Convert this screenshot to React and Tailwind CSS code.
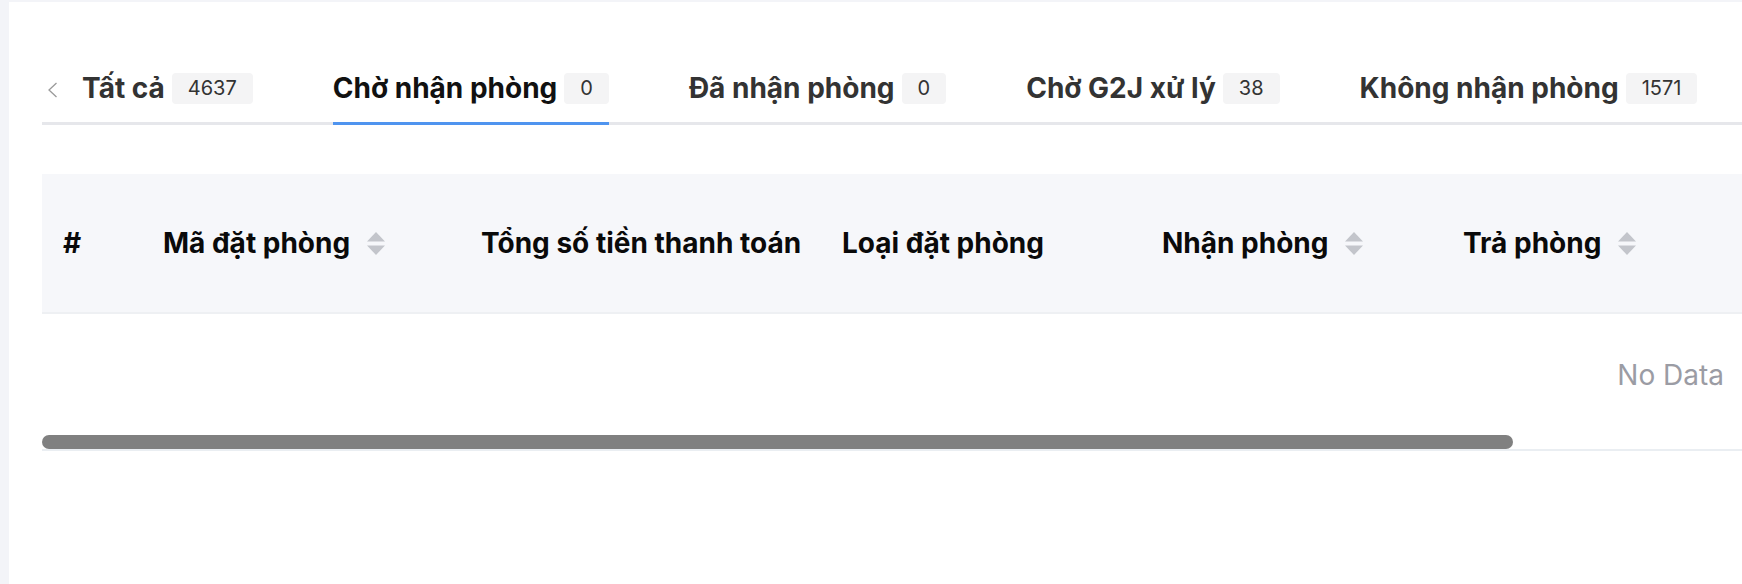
import React from 'react';

const tabs = [
  { label: 'Tất cả', count: '4637' },
  { label: 'Chờ nhận phòng', count: '0', active: true },
  { label: 'Đã nhận phòng', count: '0' },
  { label: 'Chờ G2J xử lý', count: '38' },
  { label: 'Không nhận phòng', count: '1571' },
];

const columns = [
  { title: '#', width: 'w-[100px]' },
  { title: 'Mã đặt phòng', width: 'w-[318px]', sort: true },
  { title: 'Tổng số tiền thanh toán', width: 'w-[361px]' },
  { title: 'Loại đặt phòng', width: 'w-[320px]' },
  { title: 'Nhận phòng', width: 'w-[301px]', sort: true },
  { title: 'Trả phòng', width: 'w-[320px]', sort: true },
];

function SortIcon() {
  return (
    <svg width="20" height="25" viewBox="0 0 20 25" className="shrink-0">
      <polygon points="10,1 19,10.5 1,10.5" fill="#c3c5cb" />
      <polygon points="1,14.5 19,14.5 10,24" fill="#c3c5cb" />
    </svg>
  );
}

export default function App() {
  return (
    <div className="min-h-screen bg-[#f3f4f8] pl-[9px] pt-[2px]" style={{ fontFamily: 'Inter, sans-serif' }}>
      <div className="bg-white h-[582px] pl-[33px] overflow-hidden">
        {/* tabs */}
        <div className="mt-[56px] flex items-stretch border-b-[3px] border-[#e6e7eb] h-[67px] pb-[4px] whitespace-nowrap">
          <div className="flex items-center pl-[4px] pr-[24px] pt-[4px]">
            <svg width="12" height="16" viewBox="0 0 12 16" fill="none">
              <path d="M10.5 1 L3 8 L10.5 15" stroke="#9a9a9a" strokeWidth="1.3" />
            </svg>
          </div>
          {tabs.map((t) => (
            <div key={t.label} className="relative flex items-center mr-[80px]">
              <span className={`text-[28px] font-bold leading-none ${t.active ? 'text-[#111]' : 'text-[#333]'}`}>
                {t.label}
              </span>
              <span className="ml-[7px] h-[31px] px-[16px] flex items-center rounded-[4px] bg-[#f4f4f5] text-[20px] text-[#333]">
                {t.count}
              </span>
              {t.active && <div className="absolute left-0 right-0 bottom-[-7px] h-[3px] bg-[#4f94ef]" />}
            </div>
          ))}
        </div>

        {/* table */}
        <div className="mt-[49px]">
          <div className="flex h-[140px] bg-[#f6f7fa] border-b-[2px] border-[#eef0f3] whitespace-nowrap">
            {columns.map((c) => (
              <div key={c.title} className={`${c.width} shrink-0 flex items-center pl-[21px] gap-[16px]`}>
                <span className="text-[28px] font-bold text-[#0a0a0a] leading-none">{c.title}</span>
                {c.sort && <SortIcon />}
              </div>
            ))}
          </div>
          <div className="h-[121px] flex items-center justify-end pr-[18px]">
            <span className="text-[28px] text-[#9b9ca4]">No Data</span>
          </div>
          <div className="w-[1471px] h-[14px] rounded-full bg-[#808080]" />
          <div className="h-[2px] bg-[#eaeef2]" />
        </div>
      </div>
    </div>
  );
}
